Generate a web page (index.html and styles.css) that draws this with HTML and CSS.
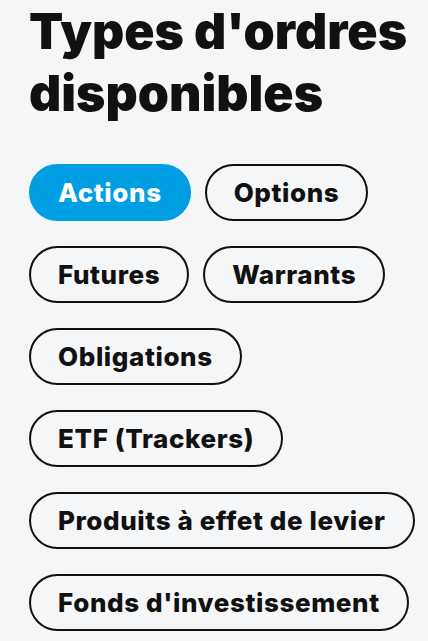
FILE: index.html
```html
<!DOCTYPE html>
<html lang="fr">
<head>
  <meta charset="UTF-8" />
  <meta name="viewport" content="width=device-width, initial-scale=1.0"/>
  <title>Types d'ordres disponibles</title>
  <link rel="stylesheet" href="styles.css">
</head>
<body>

  <div class="section">
    <h1>Types d'ordres disponibles</h1>

    <div class="chips">
      <div class="chip active">Actions</div>
      <div class="chip">Options</div>
      <div class="chip">Futures</div>
      <div class="chip">Warrants</div>
      <div class="chip">Obligations</div>
      <div class="chip">ETF (Trackers)</div>
      <div class="chip">Produits à effet de levier</div>
      <div class="chip">Fonds d'investissement</div>
    </div>
  </div>

</body>
</html>
```

FILE: styles.css
```css
body {
  margin: 0;
  font-family: Inter, 'Noto Sans', sans-serif;
  background-color: #f5f6f8;
  color: #111;
}

.section {
  padding: 0 10px 0 29px;
}

h1 {
  font-size: 50px;
  font-weight: 900;
  line-height: 62px;
  letter-spacing: 0;
  margin: 0;
}

.chips {
  display: flex;
  flex-wrap: wrap;
  column-gap: 14px;
  row-gap: 25px;
  margin-top: 40px;
}

.chip {
  height: 53px;
  line-height: 53px;
  padding: 0 27px;
  border: 2px solid #111;
  border-radius: 30px;
  font-size: 26px;
  font-weight: 800;
  letter-spacing: 0.6px;
  white-space: nowrap;
}

.chip.active {
  background-color: #009fe3;
  border-color: #009fe3;
  color: white;
}
```
